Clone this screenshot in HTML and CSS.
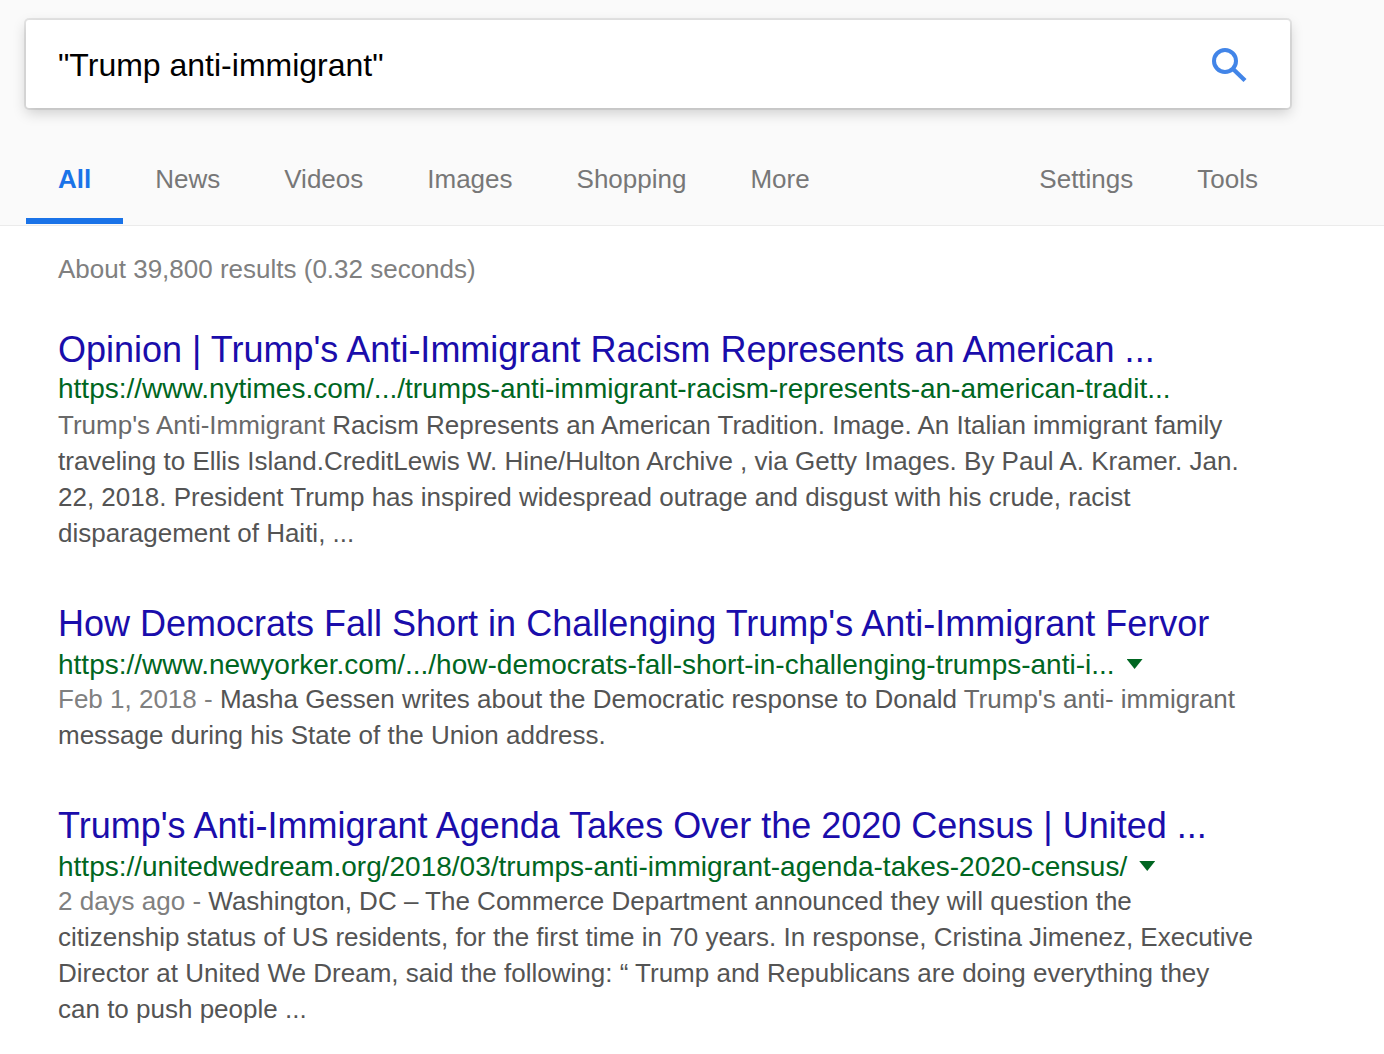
FILE: index.html
```html
<!DOCTYPE html>
<html lang="en">
<head>
<meta charset="utf-8">
<meta name="viewport" content="width=device-width, initial-scale=1">
<title>"Trump anti-immigrant" - Search</title>
<link rel="stylesheet" href="styles.css">
</head>
<body>
<header class="header">
  <form class="search" role="search">
    <input class="search-input" type="text" aria-label="Search" value="&quot;Trump anti-immigrant&quot;">
    <button class="search-button" type="submit" aria-label="Search">
      <svg class="search-icon" viewBox="0 0 36 36" aria-hidden="true"><circle cx="14" cy="14" r="11" fill="none" stroke="currentColor" stroke-width="4"/><path d="M21 21 34 33.5" fill="none" stroke="currentColor" stroke-width="4.4"/></svg>
    </button>
  </form>
  <nav class="tabs">
    <a class="tab tab-active" href="#">All</a>
    <a class="tab" href="#">News</a>
    <a class="tab" href="#">Videos</a>
    <a class="tab" href="#">Images</a>
    <a class="tab" href="#">Shopping</a>
    <a class="tab" href="#">More</a>
    <a class="tab tab-settings" href="#">Settings</a>
    <a class="tab" href="#">Tools</a>
  </nav>
</header>
<main class="results">
  <p class="stats">About 39,800 results (0.32 seconds)</p>
  <article class="result">
    <h3 class="title"><a href="#">Opinion | Trump's Anti-Immigrant Racism Represents an American ...</a></h3>
    <div class="url"><cite>https://www.nytimes.com/.../trumps-anti-immigrant-racism-represents-an-american-tradit...</cite></div>
    <p class="snippet"><em>Trump's Anti-Immigrant</em> Racism Represents an American Tradition. Image. An Italian immigrant family traveling to Ellis Island.CreditLewis W. Hine/Hulton Archive , via Getty Images. By Paul A. Kramer. Jan. 22, 2018. President Trump has inspired widespread outrage and disgust with his crude, racist disparagement of Haiti, ...</p>
  </article>
  <article class="result">
    <h3 class="title"><a href="#">How Democrats Fall Short in Challenging Trump's Anti-Immigrant Fervor</a></h3>
    <div class="url url-menu"><cite>https://www.newyorker.com/.../how-democrats-fall-short-in-challenging-trumps-anti-i...</cite><button class="arrow" type="button" aria-label="More options"></button></div>
    <p class="snippet"><span class="date">Feb 1, 2018 -</span> Masha Gessen writes about the Democratic response to Donald <em>Trump's anti- immigrant</em> message during his State of the Union address.</p>
  </article>
  <article class="result">
    <h3 class="title"><a href="#">Trump's Anti-Immigrant Agenda Takes Over the 2020 Census | United ...</a></h3>
    <div class="url url-menu"><cite>https://unitedwedream.org/2018/03/trumps-anti-immigrant-agenda-takes-2020-census/</cite><button class="arrow" type="button" aria-label="More options"></button></div>
    <p class="snippet"><span class="date">2 days ago -</span> Washington, DC – The Commerce Department announced they will question the citizenship status of US residents, for the first time in 70 years. In response, Cristina Jimenez, Executive Director at United We Dream, said the following: “ Trump and Republicans are doing everything they can to push people ...</p>
  </article>
</main>
</body>
</html>
```
FILE: styles.css
```css
* { box-sizing: border-box; }
body {
  margin: 0;
  background: #fff;
  font-family: "Liberation Sans", Arial, sans-serif;
  font-size: 26px;
}
a { text-decoration: none; }
.header {
  padding: 20px 94px 1px 26px;
  background: #fafafa;
  border-bottom: 1px solid #ebebeb;
}
.search {
  display: flex;
  align-items: center;
  height: 88px;
  padding: 2px 43px 0 32px;
  background: #fff;
  border-radius: 3px;
  box-shadow: 0 0 0 2px rgba(0, 0, 0, 0.08), 0 5px 14px rgba(0, 0, 0, 0.18);
}
.search-input {
  flex: 1;
  min-width: 0;
  padding: 0;
  border: 0;
  outline: 0;
  background: none;
  color: #000;
  font: 32px/40px "Liberation Sans", Arial, sans-serif;
}
.search-button {
  display: flex;
  padding: 0;
  border: 0;
  background: none;
  color: #4285e8;
}
.search-icon { width: 36px; height: 36px; }
.tabs { display: flex; margin-top: 32px; }
.tab {
  padding: 24px 32px;
  border-bottom: 6px solid transparent;
  color: #777;
  line-height: 30px;
}
.tab-active {
  border-bottom-color: #1a73e8;
  color: #1a73e8;
  font-weight: bold;
}
.tab-settings { margin-left: auto; }
.results { max-width: 1256px; padding: 28px 0 20px 58px; }
.stats { margin: 0 0 46px; color: #808080; line-height: 30px; }
.result { margin-bottom: 53px; }
.result:last-child { margin-bottom: 0; }
.title {
  margin: 0;
  font-size: 36px;
  font-weight: normal;
  line-height: 40px;
}
.title a { color: #1a0dab; }
.url {
  display: flex;
  align-items: center;
  padding-top: 1px;
  color: #006621;
  font-size: 28px;
  line-height: 36px;
  white-space: nowrap;
}
.url-menu {
  padding-top: 5px;
  line-height: 32px;
}
.url cite { font-style: normal; }
.arrow {
  width: 16px;
  height: 10px;
  margin: 0 0 2px 12px;
  padding: 0;
  border: 0;
  background: #006621;
  clip-path: polygon(0 0, 100% 0, 50% 100%);
}
.snippet {
  margin: 0;
  color: #545454;
  line-height: 36px;
}
.snippet em { color: #6a6a6a; font-style: normal; }
.snippet .date { color: #808080; }
```
